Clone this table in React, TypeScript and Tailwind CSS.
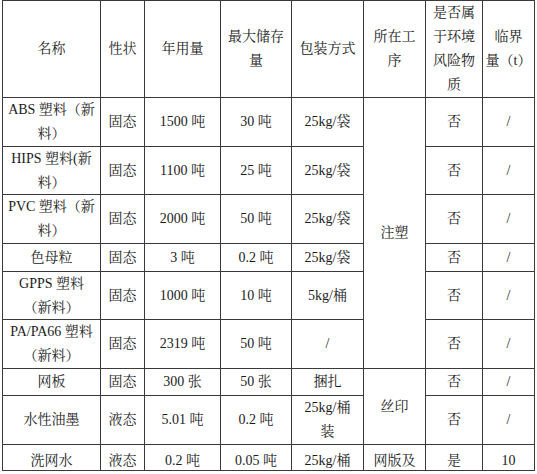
import { Fragment, ReactNode } from 'react';

type Row = { cells: string[]; last?: boolean };

const header = ['名称', '性状', '年用量', '最大储存\n量', '包装方式', '所在工\n序', '是否属\n于环境\n风险物\n质', '临界\n量（t）'];

// 所在工序 column (index 5) is merged for most rows, so it is left out here
const rows: Row[] = [
  { cells: ['ABS 塑料（新\n料）', '固态', '1500 吨', '30 吨', '25kg/袋', '否', '/'] },
  { cells: ['HIPS 塑料(新\n料）', '固态', '1100 吨', '25 吨', '25kg/袋', '否', '/'] },
  { cells: ['PVC 塑料（新\n料）', '固态', '2000 吨', '50 吨', '25kg/袋', '否', '/'] },
  { cells: ['色母粒', '固态', '3 吨', '0.2 吨', '25kg/袋', '否', '/'] },
  { cells: ['GPPS 塑料\n（新料）', '固态', '1000 吨', '10 吨', '5kg/桶', '否', '/'] },
  { cells: ['PA/PA66 塑料\n（新料）', '固态', '2319 吨', '50 吨', '/', '否', '/'] },
  { cells: ['网板', '固态', '300 张', '50 张', '捆扎', '否', '/'] },
  { cells: ['水性油墨', '液态', '5.01 吨', '0.2 吨', '25kg/桶\n装', '否', '/'] },
  { cells: ['洗网水', '液态', '0.2 吨', '0.05 吨', '25kg/桶', '网版及', '是', '10'], last: true },
];

const Lines = ({ text }: { text: string }) => (
  <>
    {text.split('\n').map((line, i) => (
      <Fragment key={i}>
        {i > 0 && <br />}
        {line}
      </Fragment>
    ))}
  </>
);

const Cell = ({ children, last, className = '' }: { children: ReactNode; last?: boolean; className?: string }) => (
  <div
    className={`bg-white flex justify-center overflow-hidden whitespace-nowrap text-center ${
      last ? 'items-start pt-[8px] leading-[16px]' : 'items-center leading-[24px]'
    } ${className}`}
  >
    <div>{children}</div>
  </div>
);

export default function App() {
  return (
    <div
      className="w-[537px] h-[474px] bg-white text-[14px] text-[#1c1c1c]"
      style={{ fontFamily: '"Liberation Serif", "Noto Serif CJK SC", "Noto Sans CJK SC", serif' }}
    >
      <div className="ml-[2px] w-[533px] grid grid-cols-[97px_43px_75px_70px_71px_61px_56px_51px] grid-rows-[96px_48px_47px_48px_27px_47px_48px_26px_48px_25px] gap-px p-px bg-[#3a3a3a]">
        {header.map((h, i) => (
          <Cell key={i}>
            <Lines text={h} />
          </Cell>
        ))}

        <Cell className="col-start-6 row-start-2 row-span-6">注塑</Cell>
        <Cell className="col-start-6 row-start-8 row-span-2">丝印</Cell>

        {rows.map((r, ri) =>
          r.cells.map((c, ci) => (
            <Cell key={`${ri}-${ci}`} last={r.last}>
              <Lines text={c} />
            </Cell>
          ))
        )}
      </div>
    </div>
  );
}
